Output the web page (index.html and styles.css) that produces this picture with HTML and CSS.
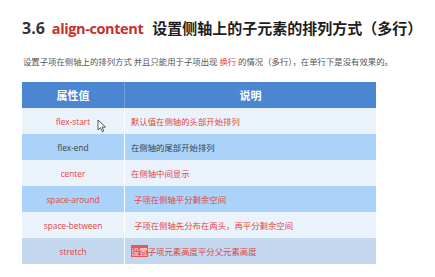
FILE: index.html
```html
<!DOCTYPE html>
<html lang="zh">
<head>
<meta charset="utf-8">
<link rel="stylesheet" href="styles.css">
</head>
<body>
<div class="page">
  <h1 class="title"><span class="num">3.6</span><span class="prop">align-content</span><span class="cn">设置侧轴上的子元素的排列方式（多行）</span></h1>
  <p class="desc">设置子项在侧轴上的排列方式 并且只能用于子项出现 <span class="red">换行</span> 的情况（多行），在单行下是没有效果的。</p>
  <div class="table-wrap">
    <table class="tbl">
      <thead>
        <tr><th class="c1">属性值</th><th class="c2">说明</th></tr>
      </thead>
      <tbody>
        <tr class="r-light"><td class="c1 red">flex-start</td><td class="c2 red">默认值在侧轴的头部开始排列</td></tr>
        <tr class="r-blue"><td class="c1 dark">flex-end</td><td class="c2 dark">在侧轴的尾部开始排列</td></tr>
        <tr class="r-light"><td class="c1 red">center</td><td class="c2 red">在侧轴中间显示</td></tr>
        <tr class="r-blue"><td class="c1 red">space-around</td><td class="c2 red ind">子项在侧轴平分剩余空间</td></tr>
        <tr class="r-light"><td class="c1 red">space-between</td><td class="c2 red ind">子项在侧轴先分布在两头，再平分剩余空间</td></tr>
        <tr class="r-gray"><td class="c1 red">stretch</td><td class="c2 red"><span class="hl">设置</span>子项元素高度平分父元素高度</td></tr>
      </tbody>
    </table>
    <svg class="cursor" width="10" height="14" viewBox="0 0 10 14"><path d="M1 1 L1 11 L3.5 8.7 L5.3 12.7 L6.8 12 L5.1 8.1 L8.5 8.1 Z" fill="#fff" stroke="#444" stroke-width="0.9" stroke-linejoin="round"/></svg>
  </div>
</div>
</body>
</html>
```
FILE: styles.css
```css
html, body {
  margin: 0;
  padding: 0;
  background: #fff;
}
.page {
  width: 435px;
  height: 277px;
  padding: 17px 0 0 22px;
  box-sizing: border-box;
  font-family: "Open Sans", "Noto Sans CJK SC", sans-serif;
}
.title {
  margin: 0;
  font-size: 15px;
  line-height: 22px;
  font-weight: 700;
  color: #222;
  display: flex;
  align-items: baseline;
  white-space: nowrap;
}
.num {
  font-size: 16px;
  margin-right: 7px;
  color: #333;
}
.prop {
  color: #c8302a;
  font-size: 14.5px;
  margin-right: 9px;
  letter-spacing: -0.4px;
}
.cn {
  font-family: "Noto Sans CJK SC", sans-serif;
  font-size: 15px;
  color: #1e1e1e;
}
.desc {
  margin: 15px 0 0 1px;
  font-family: "Noto Sans CJK SC", sans-serif;
  font-size: 8.4px;
  line-height: 12px;
  color: #555;
  white-space: nowrap;
}
.red { color: #e0453d; }
.dark { color: #3a3f4a; }
.table-wrap {
  position: relative;
  margin-top: 15px;
  width: 354px;
}
.tbl {
  width: 354px;
  border-collapse: collapse;
  table-layout: fixed;
  font-size: 8.3px;
}
.tbl tr { height: 26px; }
.tbl th {
  background: #4a86d2;
  color: #fff;
  font-family: "Noto Sans CJK SC", sans-serif;
  font-size: 11px;
  font-weight: 700;
  height: 26px;
  padding: 0;
  text-align: center;
}
.tbl th.c1 { width: 102px; border-right: 1px solid #6f9fde; }
.tbl td {
  height: 26px;
  padding: 0;
  font-family: "Open Sans", "Noto Sans CJK SC", sans-serif;
}
.tbl td.c1 {
  text-align: center;
  border-right: 1px solid #fff;
}
.tbl td.c2 {
  text-align: left;
  padding-left: 6px;
  font-size: 8.4px;
  font-family: "Noto Sans CJK SC", sans-serif;
}
.tbl td.ind { padding-left: 9px; }
.r-light td { background: #eaf3fc; }
.r-blue td { background: #abd3fa; }
.r-gray td { background: #c3d8ef; }
.hl {
  background: #e25a55;
  color: #fde;
}
.cursor {
  position: absolute;
  left: 75px;
  top: 37px;
  z-index: 2;
}
```
